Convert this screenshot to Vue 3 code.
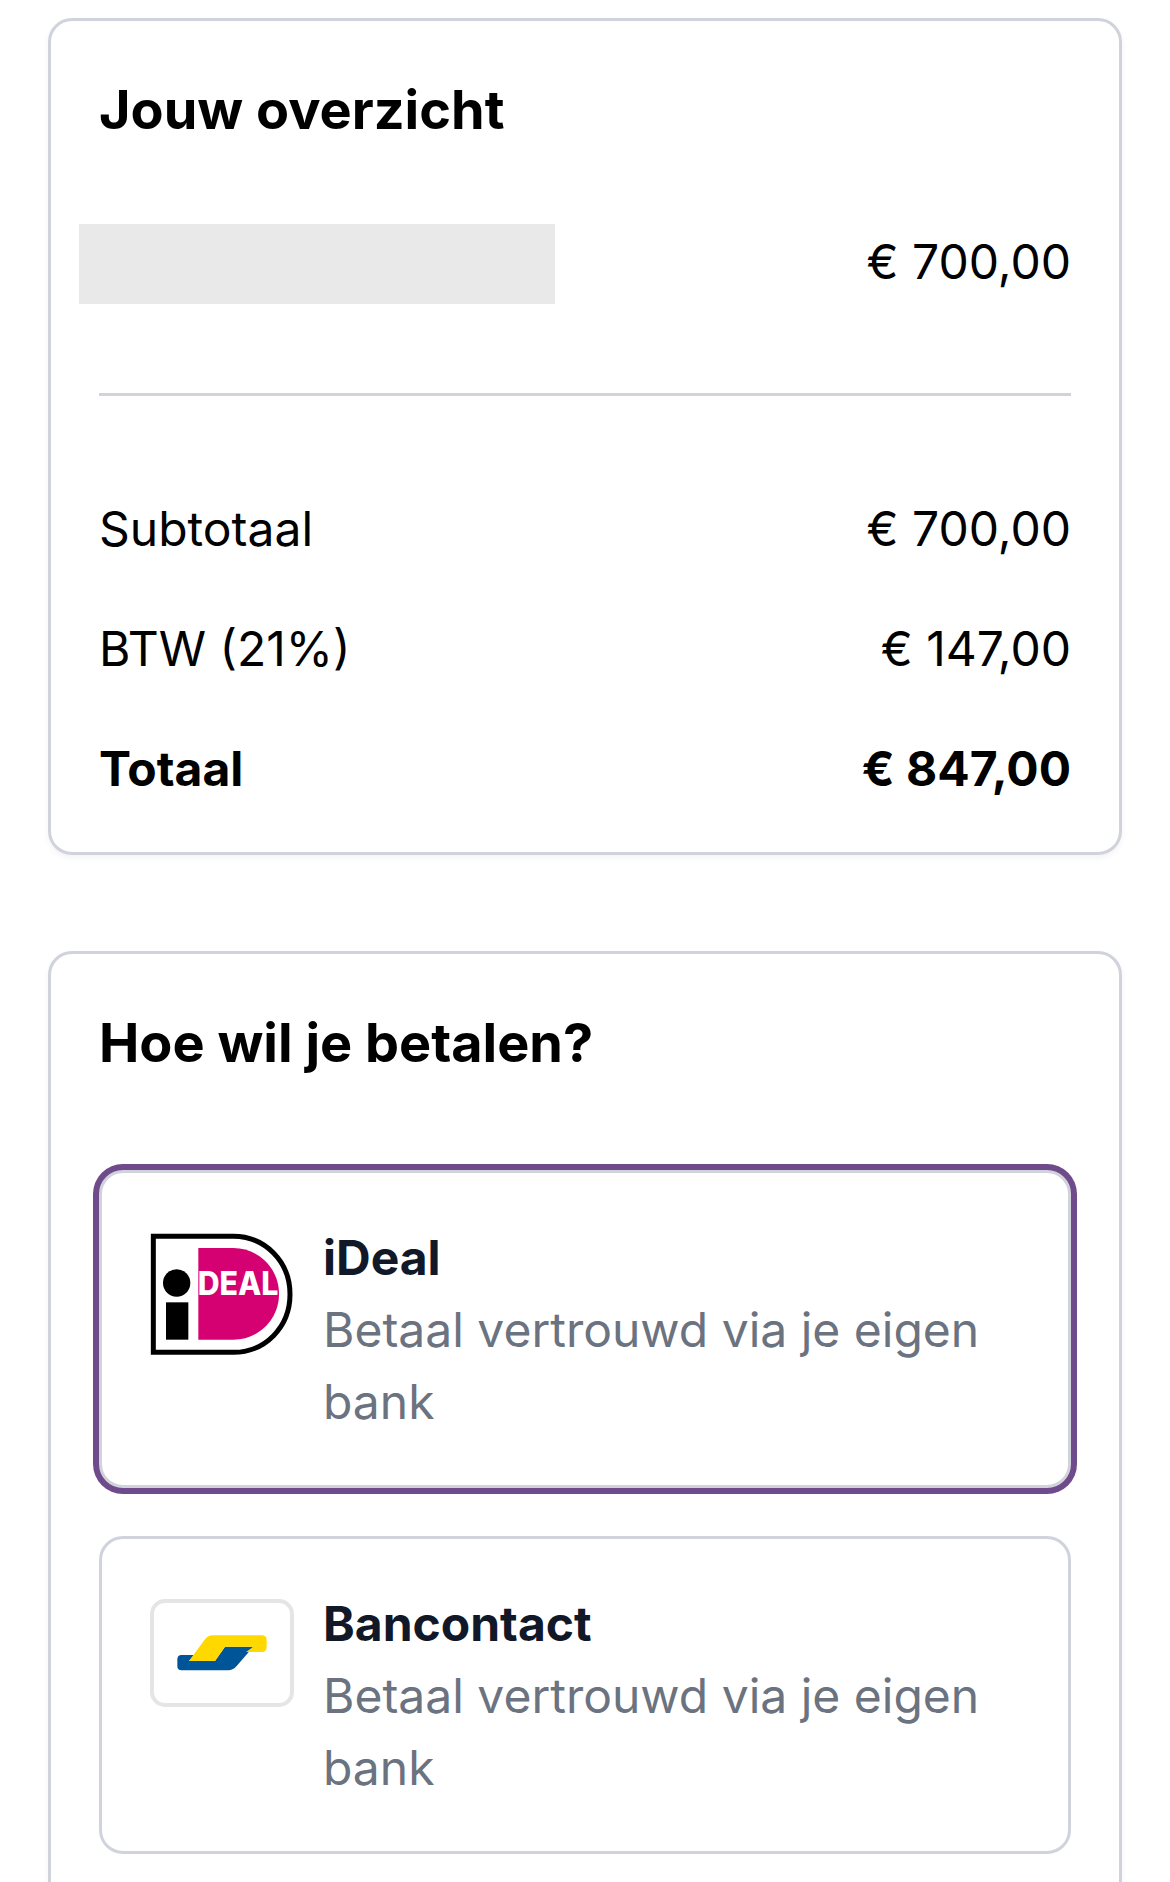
<template>
  <div class="page">
    <section class="card">
      <h2 class="card-title">Jouw overzicht</h2>
      <div class="row product-row">
        <div class="redacted"></div>
        <span class="product-price">€ 700,00</span>
      </div>
      <div class="divider"></div>
      <div class="totals">
        <div v-for="line in totals" :key="line.label" class="row" :class="{ strong: line.strong }">
          <span>{{ line.label }}</span>
          <span>{{ line.amount }}</span>
        </div>
      </div>
    </section>

    <section class="card pay-card">
      <h2 class="card-title">Hoe wil je betalen?</h2>
      <div class="options">
        <article class="option selected">
          <svg class="logo-ideal" viewBox="180 220 432 366" width="144" height="122">
            <path d="M190 230H430C525 230 600 305 600 404C600 503 525 578 430 578H190Z" fill="#fff" stroke="#000" stroke-width="15" />
            <path d="M325 265H430C505 265 567 325 567 403C567 480 505 540 430 540H325Z" fill="#d50172" />
            <circle cx="260" cy="370" r="41" fill="#000" />
            <rect x="228" y="428" width="67" height="112" fill="#000" />
            <text x="323" y="405" class="ideal-word" textLength="242" lengthAdjust="spacingAndGlyphs">DEAL</text>
          </svg>
          <div class="option-text">
            <strong>iDeal</strong>
            <span>Betaal vertrouwd via je eigen bank</span>
          </div>
        </article>
        <article class="option">
          <div class="logo-box">
            <svg viewBox="192 219 408 300" width="136" height="100">
              <path d="M262 388Q262 375 275 375H312L297 393H375L405 350H490L440 408Q428 421 415 421H275Q262 421 262 408Z" fill="#005498" />
              <path d="M297 393L345 328Q354 316 368 316H515Q530 316 530 331V350Q530 366 515 366H468L490 350H405L375 393Z" fill="#ffd800" />
            </svg>
          </div>
          <div class="option-text">
            <strong>Bancontact</strong>
            <span>Betaal vertrouwd via je eigen bank</span>
          </div>
        </article>
      </div>
    </section>
  </div>
</template>

<script setup>
const totals = [
  { label: 'Subtotaal', amount: '€ 700,00' },
  { label: 'BTW (21%)', amount: '€ 147,00' },
  { label: 'Totaal', amount: '€ 847,00', strong: true }
];
</script>

<style scoped>
.page {
  height: 1882px;
  overflow: hidden;
  box-sizing: border-box;
  padding: 18px 48px 0;
  background: #fff;
  color: #000;
  font-family: Inter, "Liberation Sans", sans-serif;
  font-size: 48px;
  line-height: 72px;
}

.card {
  box-sizing: border-box;
  width: 1074px;
  padding: 48px 48px 47px;
  border: 3px solid #d1d3dc;
  border-radius: 24px;
  background: #fff;
  box-shadow: 0 3px 6px rgba(0, 0, 0, 0.05);
}

.pay-card {
  margin-top: 96px;
  padding-bottom: 200px;
}

.card-title {
  margin: 0;
  font-size: 54px;
  line-height: 82px;
  font-weight: 700;
}

.row {
  display: flex;
  justify-content: space-between;
  align-items: center;
}

.product-row {
  height: 80px;
  margin-top: 73px;
  margin-left: -20px;
}

.product-price {
  margin-bottom: 4px;
}

.redacted {
  width: 476px;
  height: 80px;
  background: #e9e9e9;
}

.divider {
  height: 3px;
  margin-top: 89px;
  background: #d1d3dc;
}

.totals {
  display: flex;
  flex-direction: column;
  gap: 48px;
  margin-top: 97px;
}

.strong {
  font-weight: 700;
}

.options {
  display: flex;
  flex-direction: column;
  gap: 48px;
  margin-top: 86px;
}

.option {
  display: flex;
  gap: 29px;
  height: 318px;
  box-sizing: border-box;
  padding: 48px;
  border: 3px solid #d1d3dc;
  border-radius: 24px;
  background: #fff;
}

.selected {
  box-shadow: 0 0 0 6px #704b8b;
}

.logo-ideal,
.logo-box {
  flex: none;
  margin-top: 12px;
}

.logo-box {
  box-sizing: border-box;
  width: 144px;
  height: 108px;
  border: 4px solid #e5e5e5;
  border-radius: 15px;
}

.logo-box svg {
  display: block;
}

.ideal-word {
  font-family: Inter, "Liberation Sans", sans-serif;
  font-size: 96px;
  font-weight: 800;
  fill: #fff;
}

.option-text {
  display: flex;
  flex-direction: column;
  flex: 1;
  min-width: 0;
  margin-top: 1px;
}

.option-text strong {
  color: #111827;
  font-weight: 700;
}

.option-text span {
  color: #6b7280;
}
</style>
